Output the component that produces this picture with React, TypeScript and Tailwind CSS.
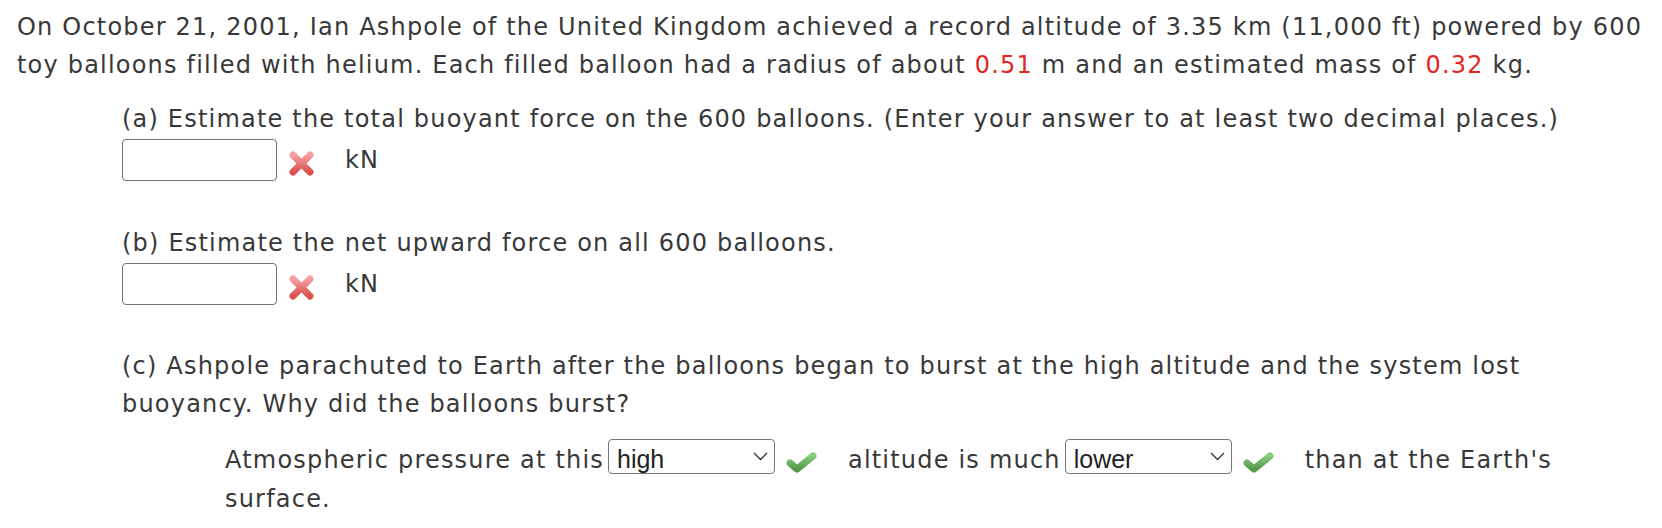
import React from 'react';

const WrongIcon = () => (
  <svg width="27" height="27" viewBox="0 0 27 27">
    <defs>
      <linearGradient id="xg" x1="0" y1="0" x2="0" y2="1">
        <stop offset="0" stopColor="#f4a0a0" />
        <stop offset="1" stopColor="#d9504e" />
      </linearGradient>
    </defs>
    <path d="M5 5 L22 22 M22 5 L5 22" stroke="url(#xg)" strokeWidth="7" strokeLinecap="round" fill="none" />
  </svg>
);

const RightIcon = () => (
  <svg width="33" height="24" viewBox="0 0 33 24">
    <defs>
      <linearGradient id="cg" x1="0" y1="0" x2="0" y2="1">
        <stop offset="0" stopColor="#8ccb82" />
        <stop offset="1" stopColor="#52994a" />
      </linearGradient>
    </defs>
    <path d="M5 13 L12 19 L28 6" stroke="url(#cg)" strokeWidth="7" strokeLinecap="round" strokeLinejoin="round" fill="none" />
  </svg>
);

const AnswerBox = () => (
  <div className="flex items-center mt-[1px]">
    <input
      type="text"
      className="w-[155px] h-[42px] border border-[#767676] rounded-[4px] bg-white outline-none"
    />
    <span className="ml-[11px] flex translate-y-[3px]"><WrongIcon /></span>
    <span className="ml-[30px]">kN</span>
  </div>
);

const Dropdown = ({ value }: { value: string }) => (
  <span className="relative inline-block w-[167px] h-[35px] ml-[4px] tracking-normal">
    <select
      defaultValue={value}
      className="appearance-none w-full h-full border border-[#767676] rounded-[4px] bg-white pl-[8px] text-[25px] text-[#222] font-['Liberation_Sans',Arial,sans-serif]"
    >
      <option>{value}</option>
    </select>
    <svg className="absolute right-[7px] top-[13px] pointer-events-none" width="15" height="9" viewBox="0 0 15 9">
      <path d="M1 1 L7.5 7.5 L14 1" stroke="#333" strokeWidth="1.3" fill="none" />
    </svg>
  </span>
);

export default function App() {
  return (
    <div className="w-[1662px] min-h-[528px] bg-white text-[#383838] text-[24px] leading-[38px] tracking-[1.2px] font-['DejaVu_Sans',Verdana,sans-serif] pl-[17px] pt-[8px]">
      <p>
        On October 21, 2001, Ian Ashpole of the United Kingdom achieved a record altitude of 3.35 km (11,000 ft) powered by 600
        toy balloons filled with helium. Each filled balloon had a radius of about <span className="text-[#e3261f]">0.51</span> m
        and an estimated mass of <span className="text-[#e3261f]">0.32</span> kg.
      </p>

      <div className="ml-[105px] mr-[100px]">
        <p className="mt-[16px]">
          (a) Estimate the total buoyant force on the 600 balloons. (Enter your answer to at least two decimal places.)
        </p>
        <AnswerBox />

        <p className="mt-[43px]">(b) Estimate the net upward force on all 600 balloons.</p>
        <AnswerBox />

        <p className="mt-[42px]">
          (c) Ashpole parachuted to Earth after the balloons began to burst at the high altitude and the system lost
          buoyancy. Why did the balloons burst?
        </p>

        <p className="ml-[103px] mt-[16px] leading-[39px]">
          Atmospheric pressure at this
          <Dropdown value="high" />
          <span className="inline-block align-[-6px] ml-[10px]"><RightIcon /></span>
          <span className="ml-[30px]">altitude is much</span>
          <Dropdown value="lower" />
          <span className="inline-block align-[-6px] ml-[10px]"><RightIcon /></span>
          <span className="ml-[30px]">than at the Earth's surface.</span>
        </p>
      </div>
    </div>
  );
}
